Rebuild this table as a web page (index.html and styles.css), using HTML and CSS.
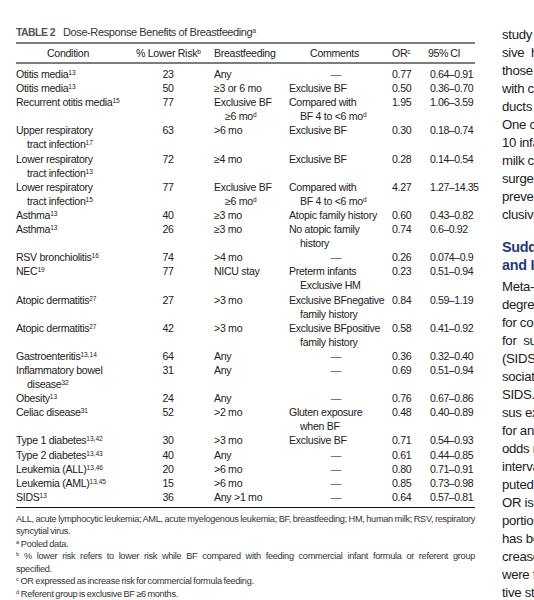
FILE: index.html
```html
<html>
  <head>
    <meta charset="utf-8">
    <link rel="stylesheet" href="styles.css">
  </head>
  <body>
    <div class="page">
      <div class="tablebox">
        <div class="caption"><b>TABLE 2</b>Dose-Response Benefits of Breastfeeding<span class="s">a</span></div>
        <table class="dose">
          <colgroup>
            <col class="c1"><col class="c2"><col class="c3"><col class="c4"><col class="c5"><col class="c6">
          </colgroup>
          <thead>
            <tr>
              <th class="mid">Condition</th>
              <th class="mid">% Lower Risk<span class="s">b</span></th>
              <th>Breastfeeding</th>
              <th class="mid">Comments</th>
              <th>OR<span class="s">c</span></th>
              <th class="ci">95% CI</th>
            </tr>
          </thead>
          <tbody>
            <tr><td>Otitis media<span class="s">13</span></td><td class="mid">23</td><td>Any</td><td class="dash">—</td><td>0.77</td><td>0.64–0.91</td></tr>
            <tr><td>Otitis media<span class="s">13</span></td><td class="mid">50</td><td>≥3 or 6 mo</td><td>Exclusive BF</td><td>0.50</td><td>0.36–0.70</td></tr>
            <tr><td>Recurrent otitis media<span class="s">15</span></td><td class="mid">77</td><td>Exclusive BF<br>≥6 mo<span class="s">d</span></td><td>Compared with<br>BF 4 to &lt;6 mo<span class="s">d</span></td><td>1.95</td><td>1.06–3.59</td></tr>
            <tr><td>Upper respiratory<br>tract infection<span class="s">17</span></td><td class="mid">63</td><td>&gt;6 mo</td><td>Exclusive BF</td><td>0.30</td><td>0.18–0.74</td></tr>
            <tr><td>Lower respiratory<br>tract infection<span class="s">13</span></td><td class="mid">72</td><td>≥4 mo</td><td>Exclusive BF</td><td>0.28</td><td>0.14–0.54</td></tr>
            <tr><td>Lower respiratory<br>tract infection<span class="s">15</span></td><td class="mid">77</td><td>Exclusive BF<br>≥6 mo<span class="s">d</span></td><td>Compared with<br>BF 4 to &lt;6 mo<span class="s">d</span></td><td>4.27</td><td>1.27–14.35</td></tr>
            <tr><td>Asthma<span class="s">13</span></td><td class="mid">40</td><td>≥3 mo</td><td>Atopic family history</td><td>0.60</td><td>0.43–0.82</td></tr>
            <tr><td>Asthma<span class="s">13</span></td><td class="mid">26</td><td>≥3 mo</td><td>No atopic family<br>history</td><td>0.74</td><td>0.6–0.92</td></tr>
            <tr><td>RSV bronchiolitis<span class="s">16</span></td><td class="mid">74</td><td>&gt;4 mo</td><td class="dash">—</td><td>0.26</td><td>0.074–0.9</td></tr>
            <tr><td>NEC<span class="s">19</span></td><td class="mid">77</td><td>NICU stay</td><td>Preterm infants<br>Exclusive HM</td><td>0.23</td><td>0.51–0.94</td></tr>
            <tr><td>Atopic dermatitis<span class="s">27</span></td><td class="mid">27</td><td>&gt;3 mo</td><td>Exclusive BFnegative<br>family history</td><td>0.84</td><td>0.59–1.19</td></tr>
            <tr><td>Atopic dermatitis<span class="s">27</span></td><td class="mid">42</td><td>&gt;3 mo</td><td>Exclusive BFpositive<br>family history</td><td>0.58</td><td>0.41–0.92</td></tr>
            <tr><td>Gastroenteritis<span class="s">13,14</span></td><td class="mid">64</td><td>Any</td><td class="dash">—</td><td>0.36</td><td>0.32–0.40</td></tr>
            <tr><td>Inflammatory bowel<br>disease<span class="s">32</span></td><td class="mid">31</td><td>Any</td><td class="dash">—</td><td>0.69</td><td>0.51–0.94</td></tr>
            <tr><td>Obesity<span class="s">13</span></td><td class="mid">24</td><td>Any</td><td class="dash">—</td><td>0.76</td><td>0.67–0.86</td></tr>
            <tr><td>Celiac disease<span class="s">31</span></td><td class="mid">52</td><td>&gt;2 mo</td><td>Gluten exposure<br>when BF</td><td>0.48</td><td>0.40–0.89</td></tr>
            <tr><td>Type 1 diabetes<span class="s">13,42</span></td><td class="mid">30</td><td>&gt;3 mo</td><td>Exclusive BF</td><td>0.71</td><td>0.54–0.93</td></tr>
            <tr><td>Type 2 diabetes<span class="s">13,43</span></td><td class="mid">40</td><td>Any</td><td class="dash">—</td><td>0.61</td><td>0.44–0.85</td></tr>
            <tr><td>Leukemia (ALL)<span class="s">13,46</span></td><td class="mid">20</td><td>&gt;6 mo</td><td class="dash">—</td><td>0.80</td><td>0.71–0.91</td></tr>
            <tr><td>Leukemia (AML)<span class="s">13,45</span></td><td class="mid">15</td><td>&gt;6 mo</td><td class="dash">—</td><td>0.85</td><td>0.73–0.98</td></tr>
            <tr class="last"><td>SIDS<span class="s">13</span></td><td class="mid">36</td><td>Any &gt;1 mo</td><td class="dash">—</td><td>0.64</td><td>0.57–0.81</td></tr>
          </tbody>
        </table>
        <div class="notes">
          <p><span class="full">ALL, acute lymphocytic leukemia; AML, acute myelogenous leukemia; BF, breastfeeding; HM, human milk; RSV, respiratory</span> syncytial virus.</p>
          <p><span class="s">a</span> Pooled data.</p>
          <p><span class="full"><span class="s">b</span> % lower risk refers to lower risk while BF compared with feeding commercial infant formula or referent group</span> specified.</p>
          <p><span class="s">c</span> OR expressed as increase risk for commercial formula feeding.</p>
          <p><span class="s">d</span> Referent group is exclusive BF ≥6 months.</p>
        </div>
      </div>
      <div class="article">
        <div class="ln">study &nbsp;&nbsp;of preterm infants fed an exclu-</div>
        <div class="ln">sive &nbsp;human milk diet compared with</div>
        <div class="ln">those &nbsp;fed human milk supplemented</div>
        <div class="ln">with cow milk-based infant formula pro-</div>
        <div class="ln">ducts &nbsp;noted a 77% reduction in NEC.</div>
        <div class="ln">One case of NEC could be prevented if</div>
        <div class="ln">10 infants received an exclusive human</div>
        <div class="ln">milk compared with cow milk formula;</div>
        <div class="ln">surgery or death from NEC could be</div>
        <div class="ln">prevented if 8 infants received an ex-</div>
        <div class="ln">clusive human milk diet.</div>
        <h2>Sudden Infant Death Syndrome<br>and Infant Mortality</h2>
        <div class="ln">Meta-analyses with a clear definition of</div>
        <div class="ln">degree of breastfeeding and adjusted</div>
        <div class="ln">for confounders and other known risks</div>
        <div class="ln">for &nbsp;sudden infant death syndrome</div>
        <div class="ln">(SIDS) note that breastfeeding is as-</div>
        <div class="ln">sociated with a 36% reduced risk of</div>
        <div class="ln">SIDS.<span class="s">13</span> Latest data comparing any ver-</div>
        <div class="ln">sus exclusive breastfeeding reveal that</div>
        <div class="ln">for any breastfeeding, the multivariable</div>
        <div class="ln">odds ratio (OR) is 0.55 (95% confidence</div>
        <div class="ln">interval [CI]: 0.44–0.69). When com-</div>
        <div class="ln">puted for exclusive breastfeeding, the</div>
        <div class="ln">OR is 0.27 (95% CI: 0.24–0.31). A pro-</div>
        <div class="ln">portion of the decrease in infant deaths</div>
        <div class="ln">has been attributed to this decrease in</div>
        <div class="ln">creased rates of breastfeeding which</div>
        <div class="ln">were found in a number of prospec-</div>
        <div class="ln">tive studies of infant mortality.</div>
      </div>
    </div>
  </body>
</html>
```

FILE: styles.css
```css
html, body {
  margin: 0;
  overflow: hidden;
  background: #fff;
}

body {
  font-family: "Liberation Sans", Arial, sans-serif;
  color: #222;
}

.page {
  display: flex;
  gap: 27px;
  padding: 24px 0 0 16px;
  width: 700px;
}

.tablebox {
  flex: none;
  width: 459px;
}

.caption {
  font-size: 11px;
  line-height: 16px;
  letter-spacing: -0.4px;
  color: #333;
  margin-bottom: 1px;
  white-space: nowrap;
}

.caption b {
  margin-right: 8px;
  font-size: 10.4px;
  letter-spacing: -0.5px;
  color: #555;
}

.s {
  font-size: 0.62em;
  vertical-align: 0.5em;
  line-height: 0;
  letter-spacing: 0;
}

table.dose {
  width: 459px;
  table-layout: fixed;
  border-collapse: collapse;
  font-size: 10.6px;
  letter-spacing: -0.3px;
  line-height: 14.1px;
}

col.c1 { width: 120px; }
col.c2 { width: 64px; }
col.c3 { width: 89px; }
col.c4 { width: 91px; }
col.c5 { width: 45px; }
col.c6 { width: 50px; }

table.dose th {
  font-weight: normal;
  text-align: left;
  padding: 2px 0;
  line-height: 14px;
  border-top: 2px solid #7d7d7d;
  border-bottom: 2px solid #7d7d7d;
  white-space: nowrap;
}

table.dose th:first-child {
  padding-right: 16px;
}

table.dose td {
  vertical-align: top;
  padding: 0;
  white-space: nowrap;
}

table.dose td:first-child,
table.dose td:nth-child(3),
table.dose td:nth-child(4) {
  padding-left: 11px;
  text-indent: -11px;
}

table.dose th:nth-child(3) {
  padding-left: 14px;
}

table.dose td:nth-child(3) {
  padding-left: 25px;
}

table.dose th:nth-child(5),
table.dose td:nth-child(5) {
  padding-left: 12px;
}

table.dose th:nth-child(6),
table.dose td:nth-child(6) {
  padding-left: 5px;
  letter-spacing: -0.45px;
}

table.dose th.ci {
  padding-left: 3px;
}

table.dose .mid {
  text-align: center;
}

table.dose td.dash {
  text-align: center;
  padding-left: 14px;
  padding-right: 0;
  color: #555;
}

table.dose tbody tr:first-child td {
  padding-top: 3px;
}

table.dose tr.last td {
  padding-bottom: 3px;
  border-bottom: 1.5px solid #111;
}

.notes {
  margin-top: 5px;
  font-size: 9.2px;
  line-height: 12.5px;
  letter-spacing: -0.3px;
  word-spacing: -0.6px;
  color: #333;
}

.notes p {
  margin: 0;
  text-align: justify;
}

.notes .full {
  display: block;
  white-space: nowrap;
  text-align-last: justify;
}

.article {
  flex: none;
  width: 260px;
  padding-top: 2px;
  font-size: 13.2px;
  line-height: 18px;
  letter-spacing: -0.3px;
  color: #1b1b1b;
}

.article .ln {
  white-space: nowrap;
}

.article h2 {
  margin: 14px 0 4px;
  font-size: 14.4px;
  line-height: 18px;
  font-weight: bold;
  color: #27397b;
  white-space: nowrap;
}
```
